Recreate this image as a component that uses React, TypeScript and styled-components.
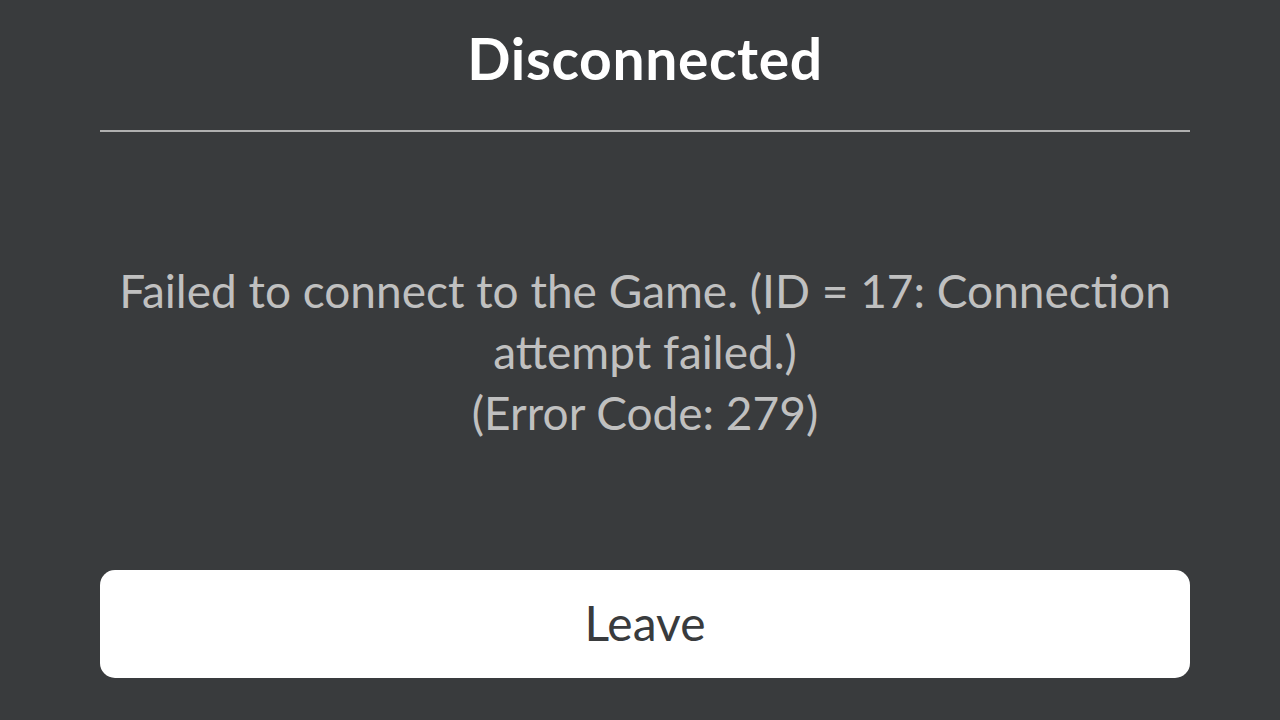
import React from 'react';
import styled, { createGlobalStyle } from 'styled-components';

const GlobalStyle = createGlobalStyle`
    html, body {
        margin: 0;
        padding: 0;
        background: #393b3d;
    }
    body {
        font-family: Lato, "Open Sans", sans-serif;
    }
`;

const Screen = styled.div`
    width: 1280px;
    height: 720px;
    box-sizing: border-box;
    padding: 0 90px 0 100px;
    background: #393b3d;
    display: flex;
    flex-direction: column;
    align-items: stretch;
    overflow: hidden;
`;

const Title = styled.h1`
    margin: 0;
    height: 116px;
    display: flex;
    align-items: center;
    justify-content: center;
    font-family: Lato, sans-serif;
    font-weight: 700;
    font-size: 57px;
    color: #ffffff;
    letter-spacing: 0.6px;
`;

const Divider = styled.hr`
    margin: 14px 0 0;
    border: none;
    height: 2px;
    background: #b0b0b0;
`;

const Message = styled.p`
    margin: 128px 0 0;
    text-align: center;
    font-family: Lato, sans-serif;
    font-weight: 400;
    font-size: 46px;
    line-height: 61px;
    color: #c0c0c0;
`;

const LeaveButton = styled.button`
    margin-top: auto;
    margin-bottom: 42px;
    height: 108px;
    padding: 0 0 4px;
    border: none;
    border-radius: 15px;
    background: #ffffff;
    color: #393b3d;
    font-family: Lato, sans-serif;
    font-size: 48px;
    cursor: pointer;
`;

export default function App() {
    return (
        <>
            <GlobalStyle />
            <Screen>
                <Title>Disconnected</Title>
                <Divider />
                <Message>
                    Failed to connect to the Game. (ID = 17: Connection attempt failed.)
                    <br />
                    (Error Code: 279)
                </Message>
                <LeaveButton>Leave</LeaveButton>
            </Screen>
        </>
    );
}
